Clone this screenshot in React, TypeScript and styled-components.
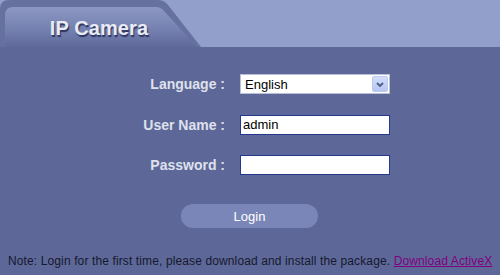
import React from 'react';
import styled, {createGlobalStyle} from 'styled-components';

const GlobalStyle = createGlobalStyle`
  html, body {
    margin: 0;
    padding: 0;
    background: #5d6898;
    font-family: "Liberation Sans", Arial, sans-serif;
  }
`;

const Page = styled.div`
  width: 500px;
  height: 275px;
  display: flex;
  flex-direction: column;
  background: #5d6898;
  overflow: hidden;
`;

const Header = styled.div`
  height: 47px;
  background: #929fca;
  display: flex;
  align-items: flex-end;
`;

const Tab = styled.div`
  width: 201px;
  height: 47px;
  box-sizing: border-box;
  padding: 7px 0 0 5px;
  background: #66719f;
  clip-path: path('M0,47 L0,9 Q0,0 9,0 L158,0 Q164,0 168,5 L201,47 Z');
  display: flex;
`;

const TabFace = styled.div`
  flex: 1;
  display: flex;
  align-items: center;
  justify-content: center;
  padding: 2px 8px 0 0;
  background: linear-gradient(#8c97c2, #7581b0 55%, #5f6a9a);
  clip-path: path('M0,40 L0,8 Q0,0 8,0 L151,0 Q156,0 159,4 L192,40 Z');
`;

const Title = styled.h1`
  margin: 0;
  font-size: 20px;
  font-weight: bold;
  color: #e9ebf2;
  text-shadow: 1px 2px 1px #2c3460;
  letter-spacing: 0.1px;
`;

const Form = styled.form`
  display: grid;
  grid-template-columns: 225px 150px;
  grid-auto-rows: 20px;
  column-gap: 15px;
  row-gap: 20.5px;
  align-items: center;
  margin-top: 27px;
`;

const Label = styled.label`
  text-align: right;
  font-size: 14px;
  font-weight: bold;
  color: #dfe1ec;
`;

const SelectBox = styled.div`
  height: 20px;
  box-sizing: border-box;
  display: flex;
  align-items: center;
  border: 1px solid #b9bfd6;
  background: #fff;
  padding-right: 1px;
`;

const NativeSelect = styled.select`
  flex: 1;
  appearance: none;
  border: 0;
  outline: none;
  background: transparent;
  font-family: "Liberation Sans", Arial, sans-serif;
  font-size: 13px;
  color: #000;
  padding: 0 0 0 4px;
  height: 18px;
`;

const ArrowButton = styled.span`
  width: 16px;
  height: 16px;
  box-sizing: border-box;
  border: 1px solid #bccaf0;
  border-radius: 2px;
  background: linear-gradient(#d3ddfb, #b7c6f2);
  display: flex;
  align-items: center;
  justify-content: center;
`;

const TextInput = styled.input`
  width: 150px;
  height: 20px;
  box-sizing: border-box;
  border: 1px solid #23398f;
  background: #fff;
  padding: 0 2px;
  font-family: "Liberation Sans", Arial, sans-serif;
  font-size: 13px;
  color: #000;
  outline: none;
`;

const ButtonRow = styled.div`
  display: flex;
  justify-content: center;
  margin-top: 29px;
  padding-right: 1px;
`;

const LoginButton = styled.button`
  width: 137px;
  height: 24px;
  border: 0;
  border-radius: 12px;
  background: #7a86b8;
  color: #fff;
  font-family: "Liberation Sans", Arial, sans-serif;
  font-size: 13px;
  cursor: pointer;
`;

const Note = styled.p`
  margin: 26px 0 0 8px;
  font-size: 12px;
  line-height: 14px;
  letter-spacing: 0.12px;
  color: #17182e;
  white-space: nowrap;
`;

const Link = styled.a`
  color: #800080;
  text-decoration: underline;
`;

export default function App() {
  return (
    <Page>
      <GlobalStyle />
      <Header>
        <Tab>
          <TabFace>
            <Title>IP Camera</Title>
          </TabFace>
        </Tab>
      </Header>
      <Form onSubmit={(e) => e.preventDefault()}>
        <Label htmlFor="lang">Language :</Label>
        <SelectBox>
          <NativeSelect id="lang" defaultValue="en">
            <option value="en">English</option>
          </NativeSelect>
          <ArrowButton>
            <svg width="8" height="5" viewBox="0 0 8 5">
              <path d="M1 1 L4 4 L7 1" fill="none" stroke="#4a5d86" strokeWidth="1.8" />
            </svg>
          </ArrowButton>
        </SelectBox>
        <Label htmlFor="user">User Name :</Label>
        <TextInput id="user" defaultValue="admin" />
        <Label htmlFor="pass">Password :</Label>
        <TextInput id="pass" type="password" />
      </Form>
      <ButtonRow>
        <LoginButton type="button">Login</LoginButton>
      </ButtonRow>
      <Note>
        Note: Login for the first time, please download and install the package. <Link href="#">Download ActiveX</Link>
      </Note>
    </Page>
  );
}
